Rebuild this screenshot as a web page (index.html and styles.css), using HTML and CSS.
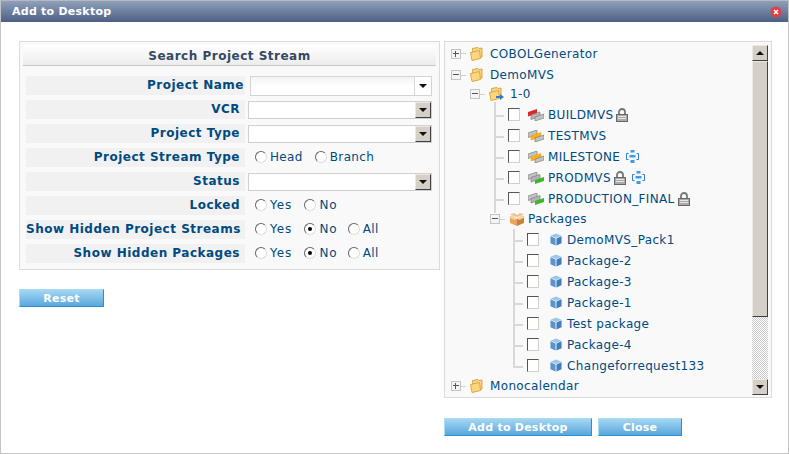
FILE: index.html
```html
<!DOCTYPE html>
<html lang="en">
<head>
<meta charset="utf-8">
<title>Add to Desktop</title>
<link rel="stylesheet" href="styles.css">
</head>
<body>
<svg class="defs" width="0" height="0" aria-hidden="true">
  <symbol id="folder" viewBox="0 0 13 14">
    <path d="M2.500 3.500V1.500L8 .5l1 1 3-.5v9l-9.500 3z" fill="#f4d58c" stroke="#d9a441" stroke-width="1"/>
    <path d="M.5 5.500l9-2 1 8-8.500 2z" fill="#fbd67e" stroke="#dfa845" stroke-width="1"/>
  </symbol>
  <symbol id="cube" viewBox="0 0 13 13">
    <path d="M6.500 0L12.500 2.500 6.500 5 .5 2.500z" fill="#9cc6ea"/>
    <path d="M.5 3L6 5.500V13L.5 10.500z" fill="#5a94cf"/>
    <path d="M12.500 3L7 5.500V13l5.500-2.500z" fill="#3f7dbd"/>
  </symbol>
  <symbol id="box" viewBox="0 0 16 13">
    <path d="M8 4L1 1.500 5 0l3 2 3-2 4 1.500z" fill="#e9c193"/>
    <path d="M1 3l7 3v7L1 10z" fill="#e8a65f"/>
    <path d="M15 3L8 6v7l7-3z" fill="#c8823c"/>
    <path d="M0 4.500L3 2l5 3-2 2zM16 4.500L13 2 8 5l2 2z" fill="#f3d3ab"/>
  </symbol>
  <symbol id="stream-red" viewBox="0 0 16 12">
    <path d="M0 3l9-3v4.500L0 7.500z" fill="#d8282c"/>
    <path d="M3 6l9-3v4.500L3 10.500z" fill="#b4b4b4" stroke="#808080" stroke-width=".7"/>
    <path d="M7 8l9-3v4L7 12z" fill="#c4c4c4" stroke="#808080" stroke-width=".7"/>
  </symbol>
  <symbol id="stream-orange" viewBox="0 0 16 12">
    <path d="M0 3l9-3v4.500L0 7.500z" fill="#c4c4c4" stroke="#808080" stroke-width=".7"/>
    <path d="M3 5.500l10-3V7L3 10z" fill="#ffb010" stroke="#e59a00" stroke-width=".4"/>
    <path d="M7 8l9-3v4L7 12z" fill="#c4c4c4" stroke="#808080" stroke-width=".7"/>
  </symbol>
  <symbol id="stream-green" viewBox="0 0 16 12">
    <path d="M0 3l9-3v4.500L0 7.500z" fill="#c4c4c4" stroke="#808080" stroke-width=".7"/>
    <path d="M3 5.500l9-3V7L3 10z" fill="#b4b4b4" stroke="#808080" stroke-width=".7"/>
    <path d="M7 8l9-3v4L7 12z" fill="#3fb52c"/>
  </symbol>
  <symbol id="lock" viewBox="0 0 12 14">
    <path d="M3 7V4a3 3 0 0 1 6 0v3" fill="none" stroke="#777" stroke-width="1.800"/>
    <rect x=".5" y="6.500" width="11" height="7" fill="#aaa" stroke="#666"/>
    <path d="M2 8.500h8M2 10.500h8" stroke="#e6e6e6"/>
  </symbol>
  <symbol id="sync" viewBox="0 0 13 13">
    <path d="M2.500 3.500H.5v6h2M10.500 3.500h2v6h-2" fill="none" stroke="#2f7fd0"/>
    <path d="M4.500 0h4v2.500h-4zM3.500 5h6v2.500h-6zM4.500 10h4v3h-4z" fill="#3e9be6"/>
  </symbol>
</svg>

<div class="window">
  <header class="titlebar">
    <h1 class="title">Add to Desktop</h1>
    <svg class="close" width="12" height="12" viewBox="0 0 12 12"><circle cx="6" cy="6" r="5.500" fill="#e04040"/><path d="M4 4l4 4M8 4l-4 4" stroke="#fff" stroke-width="1.600"/></svg>
  </header>

  <main class="content">
    <section class="left">
      <div class="panel">
        <h2 class="panel-title">Search Project Stream</h2>
        <div class="form">
          <div class="frow first"><div class="label">Project Name</div>
            <div class="combo"><div class="combo-field"></div><div class="combo-arrow"><i class="tri"></i></div></div></div>
          <div class="frow"><div class="label">VCR</div>
            <div class="select"><div class="select-btn"><i class="tri"></i></div></div></div>
          <div class="frow"><div class="label">Project Type</div>
            <div class="select"><div class="select-btn"><i class="tri"></i></div></div></div>
          <div class="frow"><div class="label">Project Stream Type</div>
            <div class="radios"><span class="opt"><i class="radio"></i>Head</span><span class="opt"><i class="radio"></i>Branch</span></div></div>
          <div class="frow"><div class="label">Status</div>
            <div class="select"><div class="select-btn"><i class="tri"></i></div></div></div>
          <div class="frow"><div class="label">Locked</div>
            <div class="radios"><span class="opt yes"><i class="radio"></i>Yes</span><span class="opt short-opt"><i class="radio"></i>No</span></div></div>
          <div class="frow"><div class="label">Show Hidden Project Streams</div>
            <div class="radios"><span class="opt yes"><i class="radio"></i>Yes</span><span class="opt short-opt"><i class="radio on"></i>No</span><span class="opt"><i class="radio"></i>All</span></div></div>
          <div class="frow"><div class="label">Show Hidden Packages</div>
            <div class="radios"><span class="opt yes"><i class="radio"></i>Yes</span><span class="opt short-opt"><i class="radio on"></i>No</span><span class="opt"><i class="radio"></i>All</span></div></div>
        </div>
      </div>
      <div class="actions-left"><button class="btn reset">Reset</button></div>
    </section>

    <section class="right">
      <div class="tree-box">
        <div class="tree">
          <div class="node l1 first-node"><i class="exp plus"></i><svg class="ic-folder"><use href="#folder"/></svg><span class="name">COBOLGenerator</span></div>
          <div class="node l1"><i class="exp minus"></i><svg class="ic-folder"><use href="#folder"/></svg><span class="name">DemoMVS</span></div>
          <div class="node l2"><i class="exp minus"></i><svg class="ic-folder"><use href="#folder"/></svg><svg class="ic-arrow" viewBox="0 0 8 6"><path d="M0 2h4V0l4 3-4 3V4H0z" fill="#3a78c8"/></svg><span class="name">1-0</span></div>
          <div class="group g3">
            <div class="node l3"><i class="hook"></i><i class="check"></i><svg class="ic-stream"><use href="#stream-red"/></svg><span class="name">BUILDMVS</span><svg class="ic-lock"><use href="#lock"/></svg></div>
            <div class="node l3"><i class="hook"></i><i class="check"></i><svg class="ic-stream"><use href="#stream-orange"/></svg><span class="name">TESTMVS</span></div>
            <div class="node l3"><i class="hook"></i><i class="check"></i><svg class="ic-stream"><use href="#stream-orange"/></svg><span class="name">MILESTONE</span><svg class="ic-sync"><use href="#sync"/></svg></div>
            <div class="node l3"><i class="hook"></i><i class="check"></i><svg class="ic-stream"><use href="#stream-green"/></svg><span class="name">PRODMVS</span><svg class="ic-lock"><use href="#lock"/></svg><svg class="ic-sync"><use href="#sync"/></svg></div>
            <div class="node l3"><i class="hook"></i><i class="check"></i><svg class="ic-stream"><use href="#stream-green"/></svg><span class="name">PRODUCTION_FINAL</span><svg class="ic-lock"><use href="#lock"/></svg></div>
            <div class="node lp"><i class="exp minus"></i><svg class="ic-box"><use href="#box"/></svg><span class="name">Packages</span></div>
          </div>
          <div class="group g4">
            <div class="node l4"><i class="hook"></i><i class="check"></i><svg class="ic-cube"><use href="#cube"/></svg><span class="name">DemoMVS_Pack1</span></div>
            <div class="node l4"><i class="hook"></i><i class="check"></i><svg class="ic-cube"><use href="#cube"/></svg><span class="name">Package-2</span></div>
            <div class="node l4"><i class="hook"></i><i class="check"></i><svg class="ic-cube"><use href="#cube"/></svg><span class="name">Package-3</span></div>
            <div class="node l4"><i class="hook"></i><i class="check"></i><svg class="ic-cube"><use href="#cube"/></svg><span class="name">Package-1</span></div>
            <div class="node l4"><i class="hook"></i><i class="check"></i><svg class="ic-cube"><use href="#cube"/></svg><span class="name">Test package</span></div>
            <div class="node l4"><i class="hook"></i><i class="check"></i><svg class="ic-cube"><use href="#cube"/></svg><span class="name">Package-4</span></div>
            <div class="node l4"><i class="hook"></i><i class="check"></i><svg class="ic-cube"><use href="#cube"/></svg><span class="name">Changeforrequest133</span></div>
          </div>
          <div class="node l1 last-node"><i class="exp plus"></i><svg class="ic-folder"><use href="#folder"/></svg><span class="name">Monocalendar</span></div>
        </div>
        <div class="scrollbar">
          <div class="sb-btn"><i class="tri up"></i></div>
          <div class="sb-thumb"></div>
          <div class="sb-track"></div>
          <div class="sb-btn"><i class="tri"></i></div>
        </div>
      </div>
      <div class="actions-right"><button class="btn add">Add to Desktop</button><button class="btn closebtn">Close</button></div>
    </section>
  </main>
</div>
</body>
</html>
```
FILE: styles.css
```css
* { box-sizing: border-box; }
html, body { margin: 0; padding: 0; }
body { font-family: "DejaVu Sans", Verdana, sans-serif; font-size: 12px; color: #004a80; background: #fff; }
.defs { position: absolute; }

.window { width: 789px; height: 454px; border: 1px solid #c4c4c4; border-top-color: #b8b8b8; background: #fff; overflow: hidden; }
.titlebar { height: 21px; display: flex; align-items: center; justify-content: space-between; padding: 0 6px 0 11px;
  background: linear-gradient(#8fa0bb, #4c6084); }
.title { margin: 0; font-size: 11px; font-weight: bold; color: #fff; letter-spacing: .25px; }
.close { display: block; }

.content { display: flex; padding: 19px 0 0 18px; }
.left { width: 425px; flex: none; }
.right { width: 328px; flex: none; }

.panel { width: 421px; height: 229px; border: 1px solid #dcdcdc; background: #f9f9f9; padding: 3px; }
.panel-title { margin: 0; height: 21px; line-height: 23px; text-align: center; font-size: 12px; font-weight: bold; color: #34495f; letter-spacing: .5px;
  background: linear-gradient(#fff, #ececec); border-bottom: 1px solid #c8c8c8; }
.form { padding: 10px 0 0 3px; display: flex; flex-direction: column; gap: 5px; }
.frow { height: 19px; display: flex; align-items: center; gap: 3px; }
.label { width: 219px; flex: none; height: 19px; line-height: 18px; background: #f1f1f1; text-align: right; padding-right: 5px; font-weight: bold; letter-spacing: .5px; white-space: nowrap; }
.first .label { padding-right: 1px; }
.first { gap: 5px; }

.combo { width: 182px; height: 20px; margin-top: 1px; border: 1px solid #d4d4d4; background: #fff; display: flex; }
.combo-field { flex: 1; background: linear-gradient(#f2f2f2, #fff 50%); }
.combo-arrow { width: 17px; border-left: 1px solid #d8d8d8; display: flex; align-items: center; justify-content: center; }
.select { width: 184px; height: 18px; border: 1px solid #d0d0d0; background: #fff; display: flex; justify-content: flex-end; }
.select-btn { width: 16px; background: #d4d0c8; border: 1px solid; border-color: #eeeae2 #404040 #404040 #eeeae2; display: flex; align-items: center; justify-content: center; }
.tri { display: block; width: 0; height: 0; border: 4px solid transparent; border-top: 4px solid #111; border-bottom: 0; }
.tri.up { border-top: 0; border-bottom: 4px solid #111; }

.radios { display: flex; gap: 12px; padding-left: 7px; margin-top: -2px; }
.opt { display: flex; align-items: center; letter-spacing: .35px; }
.opt.yes { letter-spacing: 1px; }
.opt.short-opt { letter-spacing: 1px; margin-right: -2px; }
.radio { width: 12px; height: 12px; flex: none; margin-right: 3px; border-radius: 50%; border: 1px solid; border-color: #666 #ddd #ddd #666; background: #fff; position: relative; }
.radio.on::after { content: ""; position: absolute; left: 3px; top: 3px; width: 4px; height: 4px; border-radius: 50%; background: #000; }

.actions-left { margin-top: 19px; }
.btn { display: block; height: 18px; padding: 0; border: 1px solid; border-color: #a9dcf6 #2a8fd0 #2a8fd0 #a9dcf6; background: linear-gradient(#a4d6f3, #5aa8dc);
  color: #fff; font: bold 11px "DejaVu Sans", Verdana, sans-serif; letter-spacing: .25px; text-align: center; }
.reset { width: 85px; }
.add { width: 148px; }
.closebtn { width: 84px; }

.tree-box { width: 328px; height: 357px; border: 1px solid #dcdcdc; background: #f9f9f9; display: flex; padding: 1px 0 0 0; }
.tree { width: 307px; flex: none; padding-top: 1px; }
.scrollbar { width: 16px; height: 350px; margin-top: 2px; display: flex; flex-direction: column; }
.sb-btn { height: 16px; flex: none; background: #d4d0c8; border: 1px solid; border-color: #eeeae2 #404040 #404040 #eeeae2; display: flex; align-items: center; justify-content: center; }
.sb-thumb { height: 256px; flex: none; background: #d4d0c8; border: 1px solid; border-color: #eeeae2 #404040 #404040 #eeeae2; }
.sb-track { flex: 1; background: conic-gradient(#c8c8c8 25%, #fff 0 50%, #c8c8c8 0 75%, #fff 0) 0 0 / 2px 2px; }
.actions-right { display: flex; gap: 6px; margin-top: 20px; }

.node { display: flex; align-items: center; height: 21px; position: relative; white-space: nowrap; letter-spacing: .35px; }
.node.l1 { height: 20px; padding-left: 6px; }
.node.first-node { height: 21px; padding-bottom: 2px; }
.node.last-node { height: 19px; }
.node.l2 { height: 19px; padding-left: 25px; padding-bottom: 2px; }
.node.l3 { padding-left: 63px; }
.node.lp { padding-left: 45px; height: 20px; }
.node.l4 { padding-left: 82px; }

.exp { width: 10px; height: 10px; flex: none; border: 1px solid #c4c4c4; background: #f4f4f4; position: relative; margin-right: 9px; }
.exp::before { content: ""; position: absolute; left: 1px; top: 3px; width: 6px; height: 1px; background: #555; }
.exp.plus::after { content: ""; position: absolute; left: 3px; top: 1px; width: 1px; height: 6px; background: #555; }
.l1::after, .l2::after, .lp::after { content: ""; position: absolute; top: 50%; height: 1px; width: 5px; background: #d0d0d0; }
.first-node::after, .l2::after { top: 9px; }
.l1::after { left: 16px; }
.l2::after { left: 35px; }
.lp::after { left: 55px; }

.check { width: 12px; height: 13px; flex: none; border: 1px solid; border-color: #555 #d4d0c8 #d4d0c8 #555; background: #fff; margin-right: 8px; }
.hook { position: absolute; top: 50%; height: 2px; background: #d8d8d8; }
.l3 .hook { left: 49px; width: 10px; }
.l4 .hook { left: 68px; width: 10px; }
.group { position: relative; }
.g3::before { content: ""; position: absolute; left: 49px; top: -2px; height: 111px; width: 2px; background: #d8d8d8; }
.g4::before { content: ""; position: absolute; left: 68px; top: 0; height: 138px; width: 2px; background: #d8d8d8; }

.name { display: block; }
.ic-folder { width: 13px; height: 14px; flex: none; margin-right: 7px; }
.l2 .ic-folder { margin-right: 0; }
.ic-arrow { width: 8px; height: 6px; flex: none; margin: 6px 6px 0 -6px; }
.ic-stream { width: 16px; height: 12px; flex: none; margin-right: 4px; }
.ic-box { width: 16px; height: 13px; flex: none; margin-right: 3px; }
.ic-cube { width: 12px; height: 13px; flex: none; margin: 0 5px 0 3px; }
.ic-lock { width: 12px; height: 14px; flex: none; margin-left: 3px; }
.ic-sync { width: 13px; height: 13px; flex: none; margin-left: 6px; }
```
